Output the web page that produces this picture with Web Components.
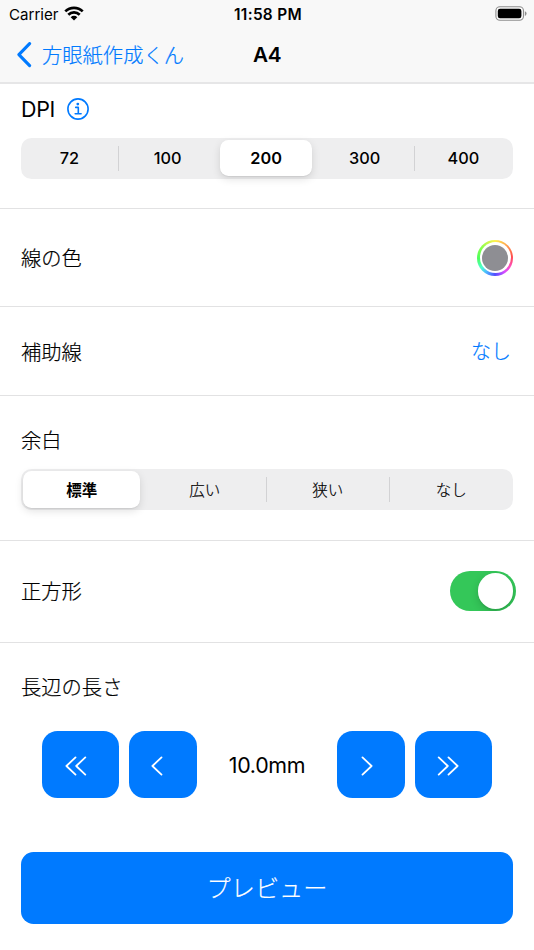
<!DOCTYPE html>
<html lang="ja">
<head>
<meta charset="utf-8">
<title>A4</title>
<style>
  body {
    margin: 0;
    background: #fff;
    color: #000;
    font-family: Inter, "Noto Sans CJK JP", sans-serif;
    --blue: #007aff;
    --jp: "Noto Sans CJK JP", sans-serif;
  }
</style>
</head>
<body>
<grid-paper-app></grid-paper-app>

<script>
function define(name, html, setup) {
  const template = document.createElement('template');
  template.innerHTML = html;
  customElements.define(name, class extends HTMLElement {
    constructor() {
      super();
      this.attachShadow({mode: 'open'});
    }
    connectedCallback() {
      if (this.shadowRoot.childNodes.length) return;
      this.shadowRoot.appendChild(template.content.cloneNode(true));
      if (setup) setup(this, this.shadowRoot);
    }
  });
}

define('status-bar', `
<style>
  :host {
    display: grid;
    grid-template-columns: 1fr auto 1fr;
    align-items: center;
    height: 27px;
    padding: 0 7px 0 9px;
    font-size: 15.1px;
    line-height: 27px;
  }
  .left { display: flex; align-items: center; gap: 6px; }
  .left span { padding-top: 1px; }
  .time { font-weight: 600; font-size: 15.4px; letter-spacing: .3px; }
  .battery { justify-self: end; }
  svg { display: block; }
  .left svg { margin-top: -1px; }
</style>
<div class="left">
  <span><slot name="carrier"></slot></span>
  <svg width="20" height="15" viewBox="0 0 20 15" fill="none" stroke="#000" stroke-width="2.7">
    <path d="M1.3 5.4a12.4 12.4 0 0 1 17.4 0"/>
    <path d="M4.3 8.7a8.1 8.1 0 0 1 11.4 0"/>
    <path d="M10 14.4 6.7 11.2a4.7 4.7 0 0 1 6.6 0z" fill="#000" stroke="none"/>
  </svg>
</div>
<span class="time"><slot name="time"></slot></span>
<svg class="battery" width="32" height="16" viewBox="0 0 32 16">
  <rect x=".9" y=".8" width="27.6" height="13.4" rx="4" fill="none" stroke="#8e8e8e" stroke-width="1.1"/>
  <rect x="2.8" y="2.7" width="23.6" height="9.6" rx="2.2"/>
  <path d="M29.9 5.3c2.2.9 2.2 3.7 0 4.6z" fill="#8e8e8e"/>
</svg>
`);

define('nav-bar', `
<style>
  :host {
    display: grid;
    grid-template-columns: 1fr auto 1fr;
    align-items: center;
    height: 55px;
    padding: 0 17px;
    border-bottom: 2px solid #e6e6e7;
  }
  .back {
    display: flex;
    align-items: center;
    gap: 10px;
    color: var(--blue);
    font: 300 20.3px/30px var(--jp);
    -webkit-text-stroke: .2px;
    white-space: nowrap;
  }
  .back span { margin-top: -2px; }
  .title { font-size: 20.7px; font-weight: 600; line-height: 30px; letter-spacing: -.3px; padding-top: 1px; }
  svg { display: block; }
</style>
<div class="back">
  <svg width="15" height="26" viewBox="0 0 15 26" fill="none" stroke="currentColor" stroke-width="3.1" stroke-linecap="round" stroke-linejoin="round">
    <path d="M12.6 1.6 1.9 12.6 12.6 23.6"/>
  </svg>
  <span><slot name="back"></slot></span>
</div>
<span class="title"><slot></slot></span>
`);

define('setting-row', `
<style>
  :host {
    display: flex;
    align-items: center;
    justify-content: space-between;
    box-sizing: border-box;
    padding: 0 21px;
    border-bottom: 1px solid #e2e2e3;
  }
  :host([stacked]) { flex-direction: column; align-items: stretch; justify-content: flex-start; }
  :host([last]) { border-bottom: 0; }
  .label {
    display: flex;
    align-items: center;
    gap: 12px;
    font: 300 20.3px/30px Inter, var(--jp);
    -webkit-text-stroke: .2px;
  }
</style>
<div class="label"><slot name="label"></slot></div>
<slot></slot>
`);

define('info-icon', `
<style>
  :host { display: block; color: var(--blue); }
  svg { display: block; }
</style>
<svg width="22" height="22" viewBox="0 0 22 22" fill="none" stroke="currentColor" stroke-width="1.6">
  <circle cx="11" cy="11" r="10.1"/>
  <circle cx="10.8" cy="6.1" r="1.4" fill="currentColor" stroke="none"/>
  <path d="M8.7 9.4h2.6v6.2M8.2 15.8h5.9" stroke-linecap="round" stroke-linejoin="round"/>
</svg>
`);

define('segmented-control', `
<style>
  :host {
    display: grid;
    grid-auto-flow: column;
    grid-auto-columns: 1fr;
    box-sizing: border-box;
    height: 41.3px;
    border-radius: 10.5px;
    background: #eeeeef;
  }
  .segment {
    display: flex;
    align-items: center;
    border-right: 1.3px solid transparent;
    font-size: 16.3px;
    font-weight: 450;
  }
  .segment:last-child { border-right: 0; }
  .jp .face { padding-bottom: 2px; font: 300 15.5px/24px var(--jp); -webkit-text-stroke: .2px; }
  .face {
    flex: 1;
    display: flex;
    align-items: center;
    justify-content: center;
    box-sizing: border-box;
    height: 36.4px;
    margin: 0 3px 0 2.3px;
    border-radius: 8.5px;
  }
  .divided {
    border-image: linear-gradient(transparent 22%, #d2d2d4 22% 78%, transparent 78%) 1;
  }
  .selected .face {
    background: #fff;
    box-shadow: 0 3px 8px rgba(0, 0, 0, .12), 0 1px 1px rgba(0, 0, 0, .06);
    font-weight: 600;
  }
  .selected.jp .face { font-weight: 700; -webkit-text-stroke: 0; }
</style>
`, (host, root) => {
  const items = host.getAttribute('items').split(',');
  const selected = Number(host.getAttribute('selected'));
  items.forEach((item, i) => {
    const segment = document.createElement('div');
    segment.className = 'segment';
    if (/\D/.test(item)) segment.classList.add('jp');
    if (i === selected) segment.classList.add('selected');
    if (i !== selected && i + 1 !== selected && i < items.length - 1) {
      segment.classList.add('divided');
    }
    const face = document.createElement('span');
    face.className = 'face';
    face.textContent = item;
    segment.appendChild(face);
    root.appendChild(segment);
  });
});

define('color-well', `
<style>
  :host {
    display: grid;
    place-items: center;
    width: 36px;
    height: 36px;
    border-radius: 50%;
    background: conic-gradient(#fff34d, #ffa54d 40deg, #ff4d4d 85deg, #ff4dc0 120deg, #d84dff 145deg, #504dff 180deg, #4db8ff 212deg, #4dffd0 235deg, #4dff5c 268deg, #8dff4d 310deg, #fff34d);
  }
  .gap {
    display: grid;
    place-items: center;
    width: 31px;
    height: 31px;
    border-radius: 50%;
    background: #fff;
  }
  .color { width: 26px; height: 26px; border-radius: 50%; background: #8e8e93; }
</style>
<div class="gap"><div class="color"></div></div>
`);

define('menu-link', `
<style>
  :host { display: block; padding-top: 1px; color: var(--blue); font: 300 20px/30px var(--jp); -webkit-text-stroke: .2px; }
</style>
<slot></slot>
`);

define('toggle-switch', `
<style>
  :host {
    display: flex;
    justify-content: flex-end;
    box-sizing: border-box;
    width: 66px;
    height: 40.3px;
    margin-right: -3px;
    padding: 2.6px;
    border-radius: 21px;
    background: #34c759;
    overflow: hidden;
  }
  .knob {
    width: 35.2px;
    height: 35.2px;
    border-radius: 50%;
    background: #fff;
    box-shadow: 0 3px 8px rgba(0, 0, 0, .16), 0 2px 1px rgba(0, 0, 0, .06);
  }
</style>
<div class="knob"></div>
`);

define('step-button', `
<style>
  :host {
    display: flex;
    align-items: center;
    box-sizing: border-box;
    width: 67.6px;
    height: 66.4px;
    padding: 3px 0 0 21.5px;
    border-radius: 15.5px;
    background: var(--blue);
  }
  :host([double]) { width: 77px; padding-left: 22.5px; }
  :host([forward]) { padding-left: 24px; }
  :host([double][forward]) { padding-left: 22px; }
  svg { display: block; }
  :host([forward]) svg { transform: scaleX(-1); }
</style>
<svg width="22" height="20" viewBox="0 0 22 20" fill="none" stroke="#fff" stroke-width="1.8" stroke-linecap="round" stroke-linejoin="round">
  <path d="M10.5 1.4 1.4 10l9.1 8.6"/>
</svg>
`, (host, root) => {
  const svg = root.querySelector('svg');
  if (host.hasAttribute('double')) {
    svg.firstElementChild.setAttribute('d', 'M10.5 1.4 1.4 10l9.1 8.6M20.3 1.4 11.2 10l9.1 8.6');
  } else {
    svg.setAttribute('width', 12);
    svg.setAttribute('viewBox', '0 0 12 20');
  }
});

define('length-stepper', `
<style>
  :host {
    display: flex;
    align-items: center;
    gap: 10.4px;
    margin: 28.7px 21px 0;
  }
  .value { flex: 1; padding-top: 1px; text-align: center; font-size: 21.4px; letter-spacing: -.3px; line-height: 30px; }
</style>
<step-button double></step-button>
<step-button></step-button>
<span class="value"><slot></slot></span>
<step-button forward></step-button>
<step-button double forward></step-button>
`);

define('primary-button', `
<style>
  :host {
    display: flex;
    align-items: center;
    justify-content: center;
    box-sizing: border-box;
    height: 72px;
    margin: 0 21px;
    padding-bottom: 2px;
    border-radius: 12.5px;
    background: var(--blue);
    color: #fff;
    font: 300 24.2px/36px var(--jp);
    -webkit-text-stroke: .15px;
  }
</style>
<slot></slot>
`);

define('grid-paper-app', `
<style>
  :host { display: flex; flex-direction: column; height: 950px; overflow: hidden; }
  header { background: #f8f8f8; }
  .dpi { height: 125px; padding-top: 10px; }
  .dpi [slot="label"] { font-size: 21.4px; font-weight: 400; letter-spacing: -.3px; -webkit-text-stroke: 0; }
  .dpi segmented-control { margin-top: 13.5px; }
  .color { height: 98px; }
  .guide { height: 88.5px; padding-right: 23px; }
  .margin { height: 145px; padding-top: 30.5px; }
  .margin segmented-control { margin-top: 13px; }
  .square { height: 102px; }
  .length { height: 209.5px; padding-top: 30px; }
  .color [slot="label"], .square [slot="label"] { padding-top: 2px; }
  .guide [slot="label"] { padding-top: 4px; }
</style>
<header>
  <status-bar>
    <span slot="carrier">Carrier</span>
    <span slot="time">11:58 PM</span>
  </status-bar>
  <nav-bar><span slot="back">方眼紙作成くん</span>A4</nav-bar>
</header>
<setting-row class="dpi" stacked>
  <span slot="label">DPI</span>
  <info-icon slot="label"></info-icon>
  <segmented-control items="72,100,200,300,400" selected="2"></segmented-control>
</setting-row>
<setting-row class="color">
  <span slot="label">線の色</span>
  <color-well></color-well>
</setting-row>
<setting-row class="guide">
  <span slot="label">補助線</span>
  <menu-link>なし</menu-link>
</setting-row>
<setting-row class="margin" stacked>
  <span slot="label">余白</span>
  <segmented-control items="標準,広い,狭い,なし" selected="0"></segmented-control>
</setting-row>
<setting-row class="square">
  <span slot="label">正方形</span>
  <toggle-switch></toggle-switch>
</setting-row>
<setting-row class="length" stacked last>
  <span slot="label">長辺の長さ</span>
  <length-stepper>10.0mm</length-stepper>
</setting-row>
<primary-button>プレビュー</primary-button>
`);
</script>
</body>
</html>
